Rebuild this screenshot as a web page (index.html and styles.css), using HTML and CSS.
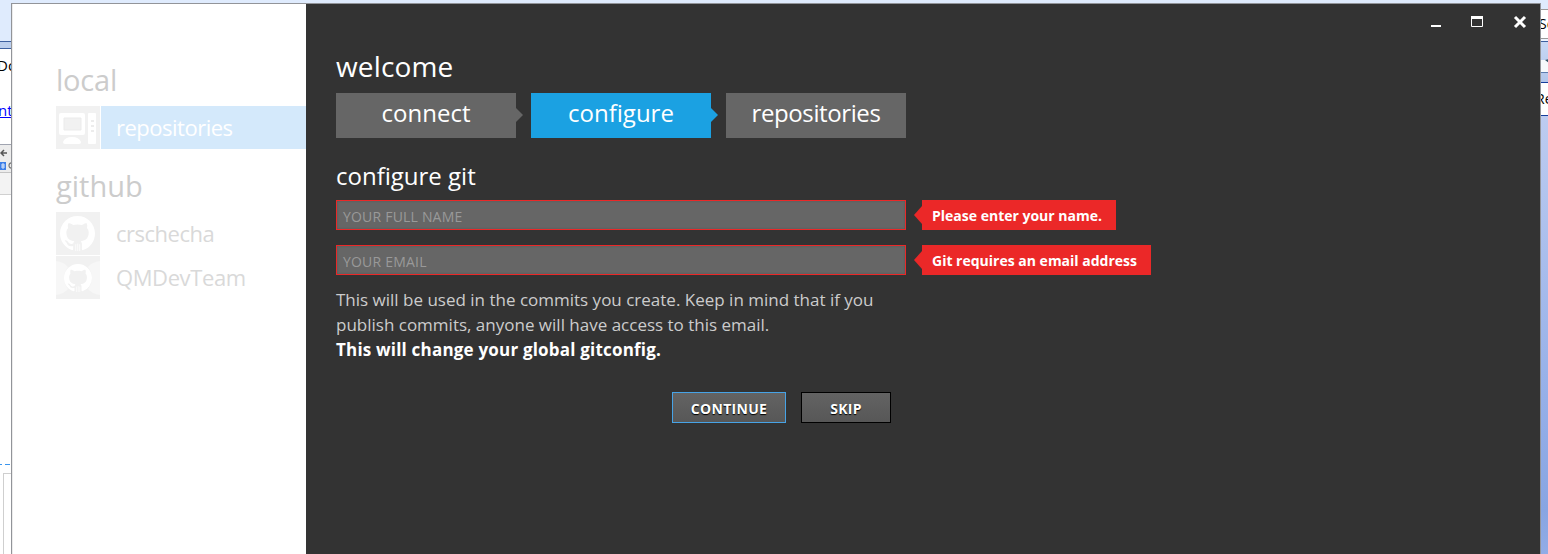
FILE: index.html
```html
<!DOCTYPE html>
<html lang="en">
<head>
<meta charset="utf-8">
<title>Welcome</title>
<link rel="stylesheet" href="styles.css">
</head>
<body>
<svg class="defs" width="0" height="0">
  <symbol id="mark" viewBox="0 0 16 16"><path fill="#fff" d="M8 0C3.58 0 0 3.58 0 8c0 3.54 2.29 6.53 5.47 7.59.4.07.55-.17.55-.38 0-.19-.01-.82-.01-1.49-2.01.37-2.53-.49-2.69-.94-.09-.23-.48-.94-.82-1.13-.28-.15-.68-.52-.01-.53.63-.01 1.08.58 1.23.82.72 1.21 1.87.87 2.33.66.07-.52.28-.87.51-1.07-1.78-.2-3.64-.89-3.64-3.95 0-.87.31-1.59.82-2.15-.08-.2-.36-1.02.08-2.12 0 0 .67-.21 2.2.82.64-.18 1.32-.27 2-.27.68 0 1.36.09 2 .27 1.53-1.04 2.2-.82 2.2-.82.44 1.1.16 1.92.08 2.12.51.56.82 1.27.82 2.15 0 3.07-1.87 3.75-3.65 3.95.29.25.54.73.54 1.48 0 1.07-.01 1.93-.01 2.2 0 .21.15.46.55.38A8.013 8.013 0 0016 8c0-4.42-3.58-8-8-8z"/><path d="M7.2 12.9V16M8.1 12.6V16M9 12.9V16" stroke="#fff" stroke-width=".35"/></symbol>
</svg>
<div class="desktop">
  <div class="behind-left">
    <div class="bl-top"></div>
    <div class="bl-bar"></div>
    <div class="bl-doc"><span class="bl-word">Do</span><span class="bl-link">nt</span></div>
    <div class="bl-tabs">
      <svg width="12" height="28" viewBox="0 0 12 28"><path d="M1 8h6M4 5L1 8l3 3" fill="none" stroke="#555" stroke-width="1.5"/><rect x="0" y="17" width="6" height="8" fill="#3d7fe8"/><path d="M2 19h2v4h-2zM2 21h2" fill="none" stroke="#fff" stroke-width=".8"/><path d="M12 18c-4-1-4 6 0 5" fill="none" stroke="#777" stroke-width="1.2"/></svg>
    </div>
    <div class="bl-tool"></div>
    <div class="bl-page"><div class="bl-dash"></div><div class="bl-box"></div></div>
  </div>
  <div class="behind-right">
    <div class="br-top"></div>
    <div class="br-search">Se</div>
    <div class="br-gap"></div>
    <div class="br-bar"><svg width="8" height="40" viewBox="0 0 8 40"><path d="M0 18h5l3 3v9H0z" fill="#f7fafc"/><path d="M4 18l4-1v4z" fill="#355566"/><path d="M0 30.500h8" stroke="#5c7cae"/></svg></div>
    <div class="br-search br-second">Re</div>
    <div class="br-fill"></div>
  </div>
  <div class="window">
    <aside class="sidebar">
      <h2 class="group local">local</h2>
      <div class="row active">
        <svg class="tile" width="44" height="43" viewBox="0 0 44 43"><path d="M0 0h44v43H0z" fill="#f1f1f1"/><path d="M5 7h22q2 0 2 2v18q0 2-2 2H5q-2 0-2-2V9q0-2 2-2z" fill="#fff"/><path d="M8 12h17v12H8z" fill="#f1f1f1" stroke="#ebebeb"/><path d="M7 36q2-5 9-5t9 5q0 2-2 2H9q-2 0-2-2z" fill="#fff"/><rect x="32" y="7" width="8" height="31" rx="1" fill="#fff"/><path d="M35 14h3v2h-3zM35 19h3v2h-3zM35 24h3v2h-3z" fill="#ececec"/></svg>
        <span class="label repos">repositories</span>
      </div>
      <h2 class="group github">github</h2>
      <div class="row">
        <svg class="tile" width="44" height="43"><path d="M0 0h44v43H0z" fill="#f1f1f1"/><use href="#mark" x="4" y="4" width="35" height="35"/></svg>
        <span class="label user">crschecha</span>
      </div>
      <div class="row">
        <svg class="tile" width="44" height="43"><path d="M0 0h44v43H0z" fill="#f1f1f1"/><path d="M0 5q8 1 12 6q-8 11 0 22q-4 5-12 6zM44 5q-8 1-12 6q8 11 0 22q4 5 12 6z" fill="#f7f7f7"/><use href="#mark" x="8" y="8" width="28" height="28"/></svg>
        <span class="label team">QMDevTeam</span>
      </div>
    </aside>
    <main class="content">
      <h1 class="welcome"><span>welcome</span></h1>
      <nav class="steps">
        <div class="step arrow"><span class="s1">connect</span></div>
        <div class="step arrow current"><span class="s2">configure</span></div>
        <div class="step"><span class="s3">repositories</span></div>
      </nav>
      <h2 class="section"><span>configure git</span></h2>
      <div class="field"><div class="input"><span class="p1">YOUR FULL NAME</span></div><div class="error e1"><span>Please enter your name.</span></div></div>
      <div class="field"><div class="input"><span class="p2">YOUR EMAIL</span></div><div class="error e2"><span>Git requires an email address</span></div></div>
      <div class="note">
        <div><span class="n1">This will be used in the commits you create. Keep in mind that if you</span></div>
        <div><span class="n2">publish commits, anyone will have access to this email.</span></div>
        <div><strong class="n3">This will change your global gitconfig.</strong></div>
      </div>
      <div class="actions"><div class="button primary"><span class="b1">CONTINUE</span></div><div class="button skip"><span class="b2">SKIP</span></div></div>
    </main>
    <svg class="controls" width="98" height="16" viewBox="0 0 98 16"><path d="M1 11h10v2H1z" fill="#fff"/><path d="M41.500 2.500h11v10h-11z" fill="none" stroke="#fff"/><path d="M41 2h12v3H41z" fill="#fff"/><path d="M85 3l10 10M95 3l-10 10" stroke="#fff" stroke-width="3"/></svg>
  </div>
</div>
</body>
</html>
```
FILE: styles.css
```css
* { box-sizing: border-box; }
body { margin: 0; font-family: "Open Sans", "Noto Sans", sans-serif; overflow: hidden; }
h1, h2 { margin: 0; font-weight: 400; }
svg { display: block; }
.defs { position: absolute; }
.desktop { position: relative; width: 1548px; height: 554px; background: #dfebfd; display: flex; justify-content: space-between; overflow: hidden; }
span, strong { white-space: nowrap; display: inline-block; }

.behind-left { width: 12px; overflow: hidden; background: #fff; }
.bl-top { height: 41px; background: #dfebfd; }
.bl-bar { height: 8px; background: #bccfed; border-top: 1px solid #3d609f; border-bottom: 1px solid #3d609f; }
.bl-doc { height: 95px; display: flex; flex-direction: column; font-size: 15px; line-height: 20px; padding-top: 6px; }
.bl-word { margin-left: -3px; }
.bl-link { margin: 25px 0 0 -2px; color: #00f; text-decoration: underline; }
.bl-tabs { height: 28px; background: #ececec; border-top: 1px solid #a0a4b0; }
.bl-tool { height: 23px; background: #f3f3f3; border-top: 1px solid #c4c4c4; border-bottom: 1px solid #d0d0d0; }
.bl-page { padding-top: 269px; }
.bl-dash { height: 1px; background: repeating-linear-gradient(90deg, #3b96ee 0 2px, transparent 2px 5px, #3b96ee 5px 8px); }
.bl-box { height: 90px; margin: 8px 0 0 3px; border: 1px solid #cfcfcf; border-width: 1px 0 0 1px; }

.behind-right { width: 10px; display: flex; flex-direction: column; overflow: hidden; padding-left: 3px; }
.br-top { height: 9px; }
.br-search { height: 30px; background: #fff; border: solid #9b9b9b; border-width: 1px 0; font-size: 14px; line-height: 28px; text-indent: -2px; overflow: hidden; }
.br-gap { height: 3px; border-bottom: 1px solid #3d609f; background: #edf4fe; }
.br-bar { height: 40px; background: linear-gradient(#c7d8f5, #b2c6ea); }
.br-second { height: 34px; border-color: #153e9c; line-height: 32px; text-indent: -5px; }
.br-fill { flex: 1; background: linear-gradient(#bdccf0, #95afe8 65%, #88a5e2 90%, #91ace6); }

.window { position: absolute; left: 11px; top: 3px; width: 1530px; height: 560px; border: 1px solid #929499; display: flex; background: #333; }
.sidebar { width: 294px; background: #fff; border-left: 1px solid #ececec; padding: 56px 0 0 43px; }
.group { font-size: 29px; line-height: 40px; color: #ccc; }
.local { margin-bottom: 6px; letter-spacing: -.2px; }
.github { margin: 17px 0 6px; }
.row { display: flex; height: 43px; margin-bottom: 1px; gap: 1px; }
.label { flex: 1; padding-left: 15px; font-size: 22px; line-height: 42px; color: #d9d9d9; }
.repos { letter-spacing: -.5px; }
.user { letter-spacing: -.5px; }
.team { letter-spacing: -.4px; }
.active .label { background: #d4e9fb; color: #fff; }

.content { flex: 1; padding: 43px 0 0 30px; color: #fff; }
.welcome { font-size: 28px; line-height: 38px; height: 46px; letter-spacing: .15px; }
.steps { display: flex; gap: 15px; }
.step { position: relative; width: 180px; height: 45px; background: #666; text-align: center; font-size: 24px; line-height: 40px; }
.s3 { letter-spacing: -.4px; }
.current { background: #1ba1e2; }
.arrow::after { content: ""; position: absolute; left: 180px; top: 15px; border: solid transparent; border-width: 7px 0 7px 7px; border-left-color: #666; }
.current::after { border-left-color: #1ba1e2; }
.section { margin-top: 20px; height: 42px; font-size: 24px; line-height: 36px; }
.field { display: flex; align-items: flex-start; gap: 16px; height: 45px; }
.input { width: 570px; height: 30px; border: 1px solid #eb2828; background: #666; box-shadow: inset 0 0 2px #555; padding-left: 6px; font-size: 14px; line-height: 31px; color: #999; }
.p1, .p2 { letter-spacing: .2px; }
.error { position: relative; height: 30px; background: #eb2828; padding-left: 10px; font-weight: 700; font-size: 14px; line-height: 31px; }
.e1 { width: 194px; }
.e2 { width: 229px; }
.error::before { content: ""; position: absolute; left: -8px; top: 6px; border: solid transparent; border-width: 9px 8px 9px 0; border-right-color: #eb2828; }
.note { margin-top: -3px; font-size: 17px; line-height: 25px; color: #ccc; }
.note strong { color: #fff; letter-spacing: .2px; }
.actions { display: flex; gap: 15px; margin: 30px 0 0 336px; }
.button { height: 31px; border: 1px solid #000; background: linear-gradient(#636363, #575757); text-align: center; font-weight: 700; font-size: 14px; line-height: 31px; text-shadow: 0 1px 1px #000; }
.b1, .b2 { letter-spacing: .3px; }
.primary { width: 114px; border-color: #47a3e6; }
.skip { width: 90px; }
.controls { position: absolute; left: 1418px; top: 10px; }
```
